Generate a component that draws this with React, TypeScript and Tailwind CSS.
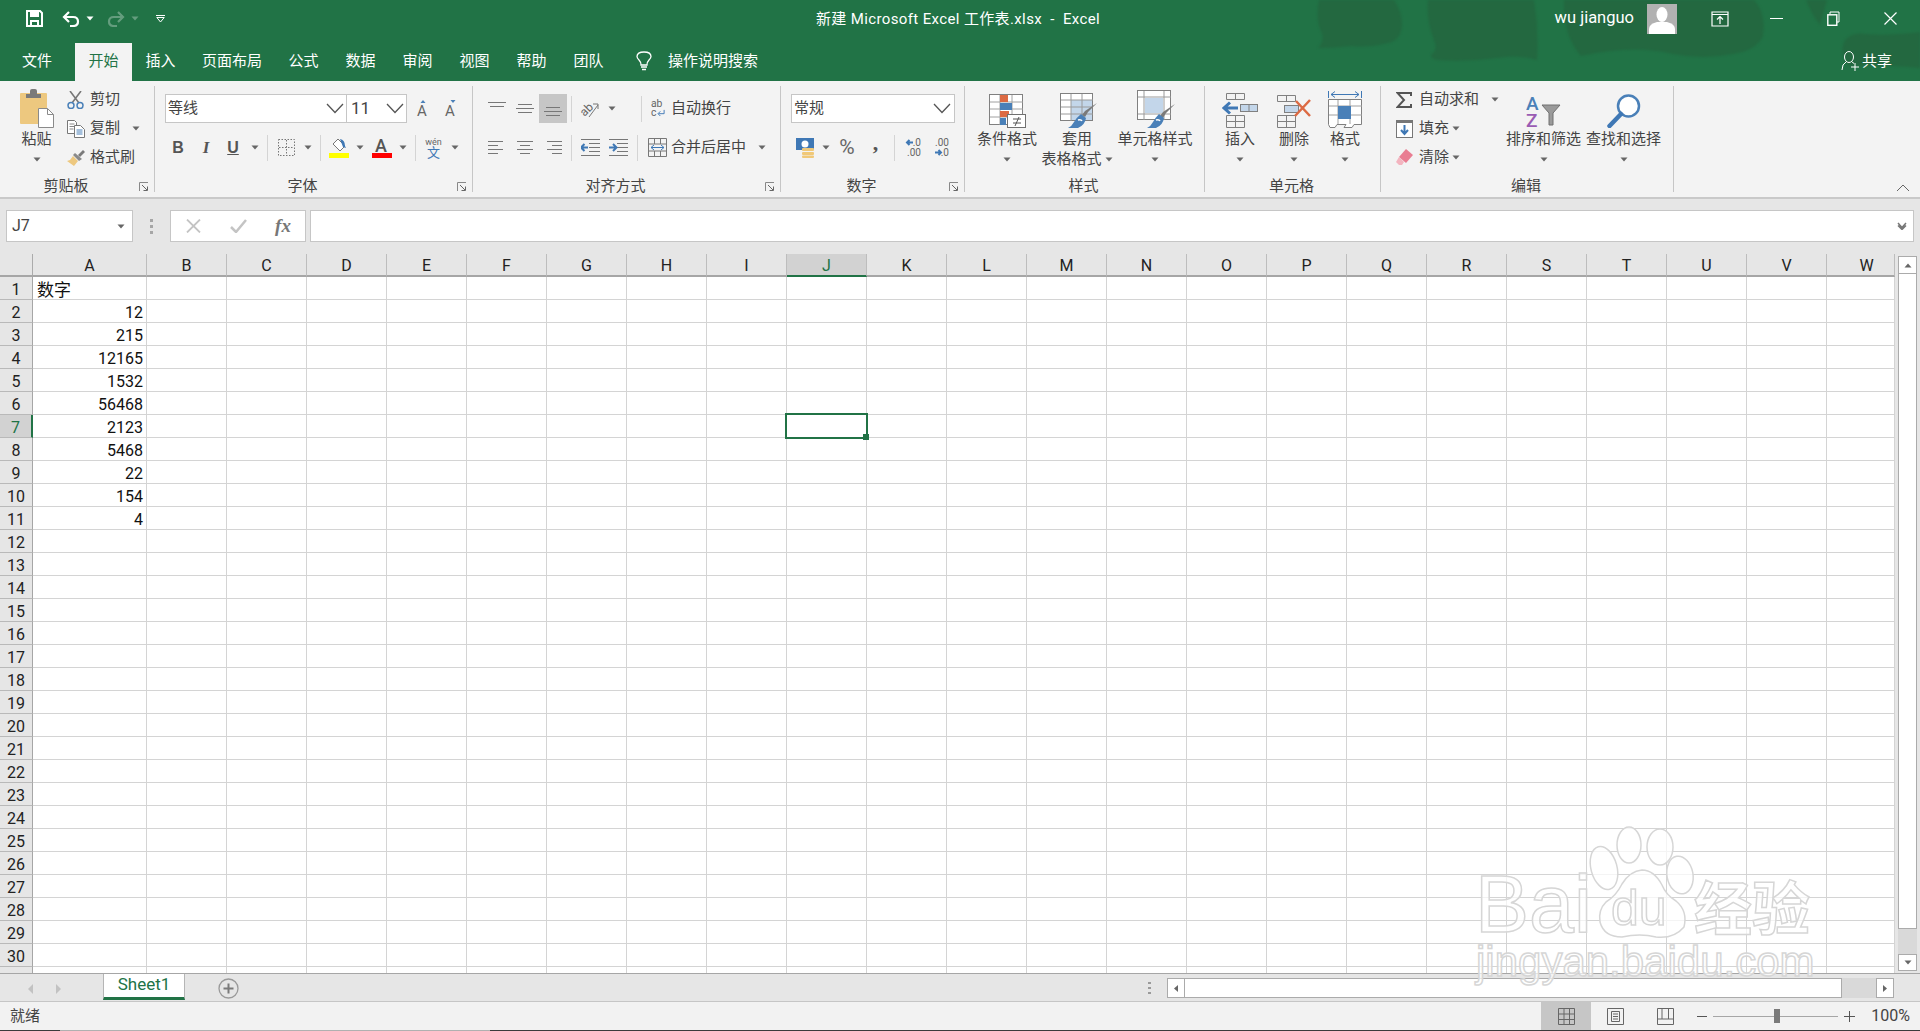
import type { ReactNode } from 'react';

const COLUMNS = ['A', 'B', 'C', 'D', 'E', 'F', 'G', 'H', 'I', 'J', 'K', 'L', 'M', 'N', 'O', 'P', 'Q', 'R', 'S', 'T', 'U', 'V', 'W'];
const ROWS = Array.from({ length: 31 }, (_, i) => i + 1);
const VALUES: Record<number, string> = { 2: '12', 3: '215', 4: '12165', 5: '1532', 6: '56468', 7: '2123', 8: '5468', 9: '22', 10: '154', 11: '4' };
const TABS = [
  { label: '插入', w: 'w-[57px]' },
  { label: '页面布局', w: 'w-[86px]' },
  { label: '公式', w: 'w-[57px]' },
  { label: '数据', w: 'w-[57px]' },
  { label: '审阅', w: 'w-[57px]' },
  { label: '视图', w: 'w-[57px]' },
  { label: '帮助', w: 'w-[57px]' },
  { label: '团队', w: 'w-[57px]' },
];

function Caret({ className = '', color = '#666' }: { className?: string; color?: string }) {
  return (
    <svg width="8" height="5" viewBox="0 0 8 5" className={`shrink-0 ${className}`}>
      <path d="M.5 .5h7L4 4.5z" fill={color} />
    </svg>
  );
}

function Chevron({ className = '' }: { className?: string }) {
  return (
    <svg width="18" height="11" viewBox="0 0 18 11" className={className}>
      <path d="M1 1l8 8.5L17 1" fill="none" stroke="#555" strokeWidth="1.3" />
    </svg>
  );
}

function Launcher() {
  return (
    <svg width="10" height="10" viewBox="0 0 10 10" className="absolute right-[5px] bottom-0">
      <path d="M.5 9V.5H9" fill="none" stroke="#888" />
      <path d="M3 3l5 5M8.5 4.5v4h-4" fill="none" stroke="#666" />
    </svg>
  );
}

function Sep() {
  return <span className="block h-[26px] w-px shrink-0 bg-[#d4d4d4]" />;
}

function PasteIcon() {
  return (
    <svg width="34" height="39" viewBox="0 0 34 39">
      <rect x="0" y="4" width="27" height="31" rx="1" fill="#edc87f" />
      <path d="M6 9V5h4V2q0-2 2-2h3q2 0 2 2v3h4v4z" fill="#7a7a7a" />
      <path d="M18.500 19.500h9l6 6v13h-15z" fill="#fff" stroke="#8a8a8a" />
      <path d="M27.500 19.500v6h6" fill="none" stroke="#8a8a8a" />
    </svg>
  );
}

function CutIcon() {
  return (
    <svg width="17" height="18" viewBox="0 0 17 18">
      <path d="M3 0l9 12M14 0L5 12" stroke="#777" strokeWidth="1.6" fill="none" />
      <circle cx="4" cy="14.500" r="3" fill="none" stroke="#4a80b8" strokeWidth="1.5" />
      <circle cx="13" cy="14.500" r="3" fill="none" stroke="#4a80b8" strokeWidth="1.5" />
    </svg>
  );
}

function CopyIcon() {
  return (
    <svg width="18" height="18" viewBox="0 0 18 18">
      <path d="M.5 .5h7l2 2v11H.5z" fill="#fff" stroke="#777" />
      <path d="M2.500 4h5M2.500 6.500h5M2.500 9h4" stroke="#888" />
      <path d="M7.500 5.500h6l4 4v8h-10z" fill="#fff" stroke="#777" />
      <path d="M9.500 10h6M9.500 12h6M9.500 14h6" stroke="#4a80b8" />
    </svg>
  );
}

function BrushIcon() {
  return (
    <svg width="18" height="16" viewBox="0 0 18 16">
      <path d="M11 5l5-5 2 2-5 5z" fill="#7a7a7a" />
      <path d="M8 3l7 6-3 2-6-6z" fill="#8a8a8a" />
      <path d="M6 6l5 5-4 5-7-5 3-1z" fill="#edc87f" />
    </svg>
  );
}

function AlignIcon({ rows, dy = 0 }: { rows: [number, number][]; dy?: number }) {
  return (
    <svg width="18" height="16" viewBox="0 0 18 16">
      {rows.map(([x, w], i) => (
        <rect key={i} x={x} y={dy + i * 4} width={w} height="1" fill="#777" />
      ))}
    </svg>
  );
}

function IndentIcon({ reverse }: { reverse?: boolean }) {
  return (
    <svg width="19" height="18" viewBox="0 0 19 18">
      <path d="M0 .5h19M8 4.500h11M8 8.500h11M8 12.500h11M0 16.500h19" stroke="#777" />
      <path d={reverse ? 'M0 8.500h6M4 5l3.500 3.500L4 12' : 'M7 8.500H1M3.500 5L0 8.500 3.500 12'} fill="none" stroke="#3f78b5" strokeWidth="2" />
    </svg>
  );
}

function TableIcon() {
  return (
    <svg width="38" height="35" viewBox="0 0 38 35" className="ml-[3px]">
      <rect x=".5" y=".5" width="32" height="27" fill="#fff" stroke="#808080" />
      <rect x="11" y="7" width="21" height="20" fill="#c3d6ea" />
      <path d="M11 1v27M22 1v27M1 7h32M1 14h32M1 21h32" stroke="#9a9a9a" />
      <path d="M37 10l-9 9-3 5-3-2 3-4z" fill="#7a7a7a" />
      <path d="M21 21l5 4q-1 7-8 10H8q4-2 6-6t7-8z" fill="#4a80b8" />
      <path d="M18 27q3-1 4 1" fill="none" stroke="#fff" strokeWidth="1.500" />
    </svg>
  );
}

function CellStyleIcon() {
  return (
    <svg width="38" height="38" viewBox="0 0 38 38" className="ml-px">
      <rect x=".5" y=".5" width="33" height="29" fill="#fff" stroke="#808080" />
      <path d="M1 7h33M1 24h33M7 1v29M27 1v29" stroke="#9a9a9a" />
      <rect x="8" y="8" width="18" height="15" fill="#c3d6ea" />
      <path d="M38 14l-9 9-3 5-3-2 3-4z" fill="#7a7a7a" />
      <path d="M22 24l5 4q-1 7-8 10H10q4-2 6-6t6-8z" fill="#4a80b8" />
      <path d="M19 30q3-1 4 1" fill="none" stroke="#fff" strokeWidth="1.500" />
    </svg>
  );
}

function CondIcon() {
  return (
    <svg width="37" height="34" viewBox="0 0 37 34">
      <rect x=".5" y=".5" width="33" height="30" fill="#fff" stroke="#808080" />
      <path d="M1 8h33M1 15h33M1 23h33M11 1v30M23 1v30" stroke="#a0a0a0" />
      <rect x="11" y="1" width="8" height="7" fill="#dc6a43" />
      <rect x="11" y="9" width="12" height="7" fill="#4a80b8" />
      <rect x="11" y="17" width="9" height="6" fill="#dc6a43" />
      <rect x="11" y="24" width="6" height="7" fill="#4a80b8" />
      <rect x="18.500" y="20.500" width="18" height="13" fill="#fff" stroke="#707070" />
      <path d="M24 25h8M24 29h8M30 23l-4 9" stroke="#555" fill="none" />
    </svg>
  );
}

function InsertIcon() {
  return (
    <svg width="36" height="35" viewBox="0 0 36 35">
      <path d="M4.500 .5h18v6h-18zM13.500 .5v6M4.500 22.500h18v12h-18zM13.500 22.500v12M4.500 28.500h18" fill="none" stroke="#808080" />
      <rect x="18.500" y="11.500" width="17" height="7" fill="#c3d6ea" stroke="#808080" />
      <path d="M27 12v6" stroke="#808080" />
      <path d="M16 15H3M8 9.500L2 15l6 5.500" fill="none" stroke="#3f78b5" strokeWidth="3" />
    </svg>
  );
}

function DeleteIcon() {
  return (
    <svg width="35" height="33" viewBox="0 0 35 33">
      <path d="M.5 .5h18v6H.5zM9.500 .5v6M.5 20.500h18v12H.5zM9.500 20.500v12M.5 26.500h18" fill="none" stroke="#808080" />
      <rect x="7.500" y="10.500" width="14" height="7" fill="#c3d6ea" stroke="#808080" />
      <path d="M19 6l14 15M33 5L18 21" stroke="#dc6a43" strokeWidth="2.500" />
    </svg>
  );
}

function FormatIcon() {
  return (
    <svg width="34" height="38" viewBox="0 0 34 38">
      <path d="M.5 1v7M33.500 1v7M3 4.500h28M7 1.500l-4 3 4 3M27 1.500l4 3-4 3" fill="none" stroke="#3f78b5" />
      <path d="M.5 9.500h33v25H26l-2 3h-8l2-3H9l-2 3H2l-1.500-3z" fill="#fff" stroke="#808080" />
      <path d="M1 16h33M1 25h33M10 10v24M22 10v24" stroke="#a0a0a0" />
      <rect x="10" y="16" width="13" height="13" fill="#4a80b8" />
    </svg>
  );
}

function SortIcon() {
  return (
    <svg width="35" height="32" viewBox="0 0 35 32">
      <text x="0" y="14" fontSize="19" fontFamily="Roboto" fontWeight="500" fill="#4a80b8">A</text>
      <text x="0" y="31" fontSize="19" fontFamily="Roboto" fontWeight="500" fill="#9a5cb4">Z</text>
      <path d="M16 9h18l-7 8v12h-4V17z" fill="#9a9a9a" stroke="#707070" />
    </svg>
  );
}

function FindIcon() {
  return (
    <svg width="34" height="34" viewBox="0 0 34 34">
      <circle cx="21.500" cy="12" r="10.500" fill="#fff" stroke="#4a80b8" strokeWidth="2.500" />
      <path d="M14 20L2.500 32" stroke="#3f78b5" strokeWidth="4.500" strokeLinecap="round" />
    </svg>
  );
}

function Group({ w, label, launcher, children }: { w: string; label: string; launcher?: boolean; children: ReactNode }) {
  return (
    <div className={`relative flex h-[106px] shrink-0 flex-col border-r border-[#c6c6c6] ${w}`}>
      <div className="flex h-[92px]">{children}</div>
      <div className={`flex h-[14px] items-center justify-center pt-[2px] ${launcher ? 'pr-[22px]' : 'pr-[2px]'}`}>{label}</div>
      {launcher && <Launcher />}
    </div>
  );
}

function Large({ icon, label, second, className }: { icon: ReactNode; label: string; second?: ReactNode; className: string }) {
  return (
    <div className={`flex shrink-0 flex-col items-center ${className}`}>
      <div className="flex h-[43px] items-end justify-center pb-px">{icon}</div>
      <div className="h-5 whitespace-nowrap leading-5">{label}</div>
      <div className="flex h-5 items-center justify-center whitespace-nowrap">{second ?? <Caret />}</div>
    </div>
  );
}

function Small({ icon, label, caret }: { icon: ReactNode; label: string; caret?: string }) {
  return (
    <div className="flex h-[29px] items-center whitespace-nowrap">
      <span className="flex w-[23px] justify-start">{icon}</span>
      {label}
      {caret && <Caret className={caret} />}
    </div>
  );
}

function Combo({ text, className, textClass }: { text: string; className: string; textClass: string }) {
  return (
    <div className={`flex h-[29px] shrink-0 items-center justify-between border border-[#c6c6c6] bg-white ${className}`}>
      <span className={textClass}>{text}</span>
      <Chevron />
    </div>
  );
}

function Ribbon() {
  return (
    <div className="flex h-[118px] border-b-2 border-[#c9c9c9] bg-[#f3f3f3] pt-[5px] text-[15px] text-[#444]">
      <Group w="w-[155px]" label="剪贴板" launcher>
        <Large className="ml-[7px] w-[59px]" icon={<PasteIcon />} label="粘贴" />
        <div className="-mt-px ml-px flex flex-col">
          <Small icon={<CutIcon />} label="剪切" />
          <Small icon={<CopyIcon />} label="复制" caret="ml-[12px]" />
          <Small icon={<BrushIcon />} label="格式刷" />
        </div>
      </Group>

      <Group w="w-[318px]" label="字体" launcher>
        <div className="flex flex-col pl-[10px] pt-[8px]">
          <div className="flex items-center">
            <Combo text="等线" className="w-[182px] pr-[2px] pl-[2px]" textClass="" />
            <Combo text="11" className="w-[60px] border-l-0 pr-[2px] pl-[4px]" textClass="text-[17px]" />
            <span className="flex w-[31px] justify-center">
              <svg width="14" height="18" viewBox="0 0 14 18">
                <path d="M7 0l2.500 3h-5z" fill="#4a80b8" />
                <text x="1" y="16" fontSize="15" fontFamily="Roboto" fill="#666">A</text>
              </svg>
            </span>
            <span className="flex w-[25px] justify-center">
              <svg width="14" height="18" viewBox="0 0 14 18">
                <path d="M9 3l2.500-3h-5z" fill="#4a80b8" />
                <text x="1" y="16" fontSize="15" fontFamily="Roboto" fill="#666">A</text>
              </svg>
            </span>
          </div>
          <div className="mt-[10px] flex h-[29px] items-center font-['Liberation_Sans'] text-[#555]">
            <span className="flex w-[26px] justify-center text-[16px] font-bold">B</span>
            <span className="flex w-[30px] justify-center font-['Liberation_Serif'] text-[17px] font-bold italic">I</span>
            <span className="flex w-[24px] justify-center text-[16px] font-bold underline">U</span>
            <span className="flex w-[20px] justify-center"><Caret /></span>
            <span className="ml-[2px]"><Sep /></span>
            <span className="flex w-[36px] justify-center">
              <svg width="17" height="17" viewBox="0 0 17 17">
                <path d="M.5 .5h16v16H.5zM8.500 1v15M1 8.500h15" fill="none" stroke="#777" strokeDasharray="1.500 1.500" />
              </svg>
            </span>
            <span className="flex w-[8px] justify-center"><Caret /></span>
            <span className="ml-[8px]"><Sep /></span>
            <span className="flex w-[36px] justify-center">
              <svg width="20" height="20" viewBox="0 0 20 20">
                <path d="M9 1l7 7-5 5-7-7z" fill="#fff" stroke="#777" />
                <path d="M11 1q5 1 5 7l1 2-3-1z" fill="#3f78b5" />
                <rect x="0" y="15" width="20" height="5" fill="#ffff00" />
              </svg>
            </span>
            <span className="flex w-[6px] justify-center"><Caret /></span>
            <span className="flex w-[38px] justify-center">
              <svg width="20" height="20" viewBox="0 0 20 20">
                <text x="3" y="14" fontSize="18" fontFamily="Roboto" fontWeight="500" fill="#555">A</text>
                <rect x="0" y="15" width="20" height="5" fill="#ff0000" />
              </svg>
            </span>
            <span className="flex w-[4px] justify-center"><Caret /></span>
            <span className="ml-[10px]"><Sep /></span>
            <span className="flex w-[35px] justify-center">
              <svg width="17" height="22" viewBox="0 0 17 22">
                <text x="8.500" y="8" textAnchor="middle" fontSize="9" fontFamily="Roboto" fill="#666">wén</text>
                <text x="8.500" y="20" textAnchor="middle" fontSize="13" fontFamily="Noto Sans CJK SC" fill="#3f78b5">文</text>
              </svg>
            </span>
            <span className="flex w-[8px] justify-center"><Caret /></span>
          </div>
        </div>
      </Group>

      <Group w="w-[308px]" label="对齐方式" launcher>
        <div className="flex flex-col pl-[10px] pt-[8px]">
          <div className="flex h-[29px] items-center">
            <span className="flex w-[28px] justify-center"><AlignIcon rows={[[0, 18], [2, 14]]} dy={1} /></span>
            <span className="flex w-[28px] justify-center"><AlignIcon rows={[[2, 14], [0, 18], [2, 14]]} dy={3} /></span>
            <span className="flex h-[29px] w-[28px] items-center justify-center bg-[#c6c6c6]"><AlignIcon rows={[[2, 14], [0, 18], [2, 14]]} dy={6} /></span>
            <span className="ml-[4px]"><Sep /></span>
            <span className="flex w-[36px] justify-center">
              <svg width="20" height="18" viewBox="0 0 20 18">
                <text x="0" y="14" fontSize="12" fontFamily="Roboto" fill="#666" transform="rotate(-45 6 10)">ab</text>
                <path d="M9 17L18 5M13 4h5v5" fill="none" stroke="#777" />
              </svg>
            </span>
            <span className="flex w-[8px] justify-center"><Caret /></span>
            <span className="ml-[25px]"><Sep /></span>
            <span className="ml-[8px] flex w-[16px] justify-center">
              <svg width="17" height="21" viewBox="0 0 17 21">
                <text x="1" y="9" fontSize="11" fontFamily="Roboto" fill="#666">ab</text>
                <text x="1" y="19" fontSize="11" fontFamily="Roboto" fill="#666">c</text>
                <path d="M15 12v4H9M11 13.500L8.500 16l2.500 2.500" fill="none" stroke="#3f78b5" />
              </svg>
            </span>
            <span className="ml-[5px] whitespace-nowrap">自动换行</span>
          </div>
          <div className="mt-[10px] flex h-[29px] items-center">
            <span className="flex w-[28px] justify-center"><AlignIcon rows={[[0, 15], [0, 10], [0, 15], [0, 10]]} dy={1} /></span>
            <span className="flex w-[28px] justify-center"><AlignIcon rows={[[1, 16], [4, 10], [1, 16], [4, 10]]} dy={1} /></span>
            <span className="flex w-[28px] justify-center"><AlignIcon rows={[[3, 15], [8, 10], [3, 15], [8, 10]]} dy={1} /></span>
            <span className="ml-[4px]"><Sep /></span>
            <span className="ml-[4px] flex w-[28px] justify-center"><IndentIcon /></span>
            <span className="flex w-[28px] justify-center"><IndentIcon reverse /></span>
            <span className="ml-[5px]"><Sep /></span>
            <span className="ml-[10px] flex w-[19px] justify-center">
              <svg width="19" height="19" viewBox="0 0 19 19">
                <path d="M.5 .5h18v18H.5zM1 6h17M1 13h17M6.500 1v5M12.500 1v5M6.500 13v5M12.500 13v5" fill="none" stroke="#777" />
                <path d="M3 9.500h13M6 7L3 9.500 6 12M13 7l3 2.500L13 12" fill="none" stroke="#3f78b5" />
              </svg>
            </span>
            <span className="ml-[4px] whitespace-nowrap">合并后居中</span>
            <Caret className="ml-[12px]" />
          </div>
        </div>
      </Group>

      <Group w="w-[184px]" label="数字" launcher>
        <div className="flex flex-col pl-[10px] pt-[8px]">
          <Combo text="常规" className="w-[164px] pr-[3px] pl-[2px]" textClass="" />
          <div className="mt-[10px] flex h-[29px] items-center">
            <span className="flex w-[29px] justify-center">
              <svg width="19" height="20" viewBox="0 0 19 20">
                <rect x="0" y="0" width="18" height="12" fill="#3f78b5" />
                <circle cx="9" cy="6" r="3.500" fill="#fff" />
                <rect x="6" y="10" width="12" height="3" rx="1" fill="#f0c878" />
                <rect x="6" y="14" width="12" height="3" rx="1" fill="#f0c878" />
                <rect x="6" y="17.500" width="12" height="2.500" rx="1" fill="#f0c878" />
              </svg>
            </span>
            <span className="flex w-[12px] justify-center"><Caret /></span>
            <span className="flex w-[30px] justify-center font-['Roboto'] text-[21px] text-[#666]">%</span>
            <span className="flex h-[22px] w-[27px] justify-center font-['Liberation_Serif'] text-[22px] font-bold leading-[12px] text-[#555]">,</span>
            <span className="ml-[5px]"><Sep /></span>
            <span className="flex w-[36px] justify-center">
              <svg width="16" height="19" viewBox="0 0 16 19">
                <path d="M8 4.500H2M4.500 2L2 4.500 4.500 7" fill="none" stroke="#3f78b5" strokeWidth="2" />
                <text x="16" y="8" textAnchor="end" fontSize="10" fontFamily="Roboto" fill="#666">.0</text>
                <text x="16" y="18" textAnchor="end" fontSize="10" fontFamily="Roboto" fill="#666">.00</text>
              </svg>
            </span>
            <span className="flex w-[20px] justify-center">
              <svg width="16" height="19" viewBox="0 0 16 19">
                <text x="16" y="8" textAnchor="end" fontSize="10" fontFamily="Roboto" fill="#666">.00</text>
                <path d="M2 14.500h6M5.500 12L8 14.500 5.500 17" fill="none" stroke="#3f78b5" strokeWidth="2" />
                <text x="16" y="18" textAnchor="end" fontSize="10" fontFamily="Roboto" fill="#666">.0</text>
              </svg>
            </span>
          </div>
        </div>
      </Group>

      <Group w="w-[240px]" label="样式">
        <Large className="ml-[12px] w-[60px]" icon={<CondIcon />} label="条件格式" />
        <Large
          className="ml-[5px] w-[70px]"
          icon={<TableIcon />}
          label="套用"
          second={<span className="flex items-center">表格格式<Caret className="ml-[3px]" /></span>}
        />
        <Large className="ml-[5px] w-[76px]" icon={<CellStyleIcon />} label="单元格样式" />
      </Group>

      <Group w="w-[176px]" label="单元格">
        <Large className="ml-[17px] w-[36px]" icon={<InsertIcon />} label="插入" />
        <Large className="ml-[19px] w-[34px]" icon={<DeleteIcon />} label="删除" />
        <Large className="ml-[17px] w-[34px]" icon={<FormatIcon />} label="格式" />
      </Group>

      <Group w="w-[293px]" label="编辑">
        <div className="-mt-px ml-[15px] flex w-[110px] flex-col">
          <Small
            icon={<svg width="16" height="16" viewBox="0 0 16 16"><path d="M15 4V1H1.500L8 8l-6.500 7H15v-3" fill="none" stroke="#555" strokeWidth="2" /></svg>}
            label="自动求和"
            caret="ml-[12px]"
          />
          <Small
            icon={
              <svg width="17" height="18" viewBox="0 0 17 18">
                <rect x=".5" y=".5" width="16" height="17" fill="#fff" stroke="#777" />
                <rect x="1" y="1" width="15" height="2" fill="#777" />
                <path d="M8.500 5v9M5 10l3.500 4 3.500-4" fill="none" stroke="#3f78b5" strokeWidth="2" />
              </svg>
            }
            label="填充"
            caret="ml-[3px]"
          />
          <Small
            icon={
              <svg width="17" height="17" viewBox="0 0 17 17">
                <path d="M10 0l7 6-7 8-7-6z" fill="#e97d92" />
                <path d="M3 8l5 5-2 3H3l-3-3z" fill="#f3b4bf" />
              </svg>
            }
            label="清除"
            caret="ml-[3px]"
          />
        </div>
        <Large className="w-[75px]" icon={<SortIcon />} label="排序和筛选" />
        <Large className="ml-[5px] w-[75px]" icon={<FindIcon />} label="查找和选择" />
      </Group>

      <div className="flex flex-1 items-end justify-end pr-[10px] pb-[3px]">
        <svg width="14" height="8" viewBox="0 0 14 8" className="mb-[2px]">
          <path d="M1 7l6-6 6 6" fill="none" stroke="#666" />
        </svg>
      </div>
    </div>
  );
}

function TitleBar() {
  return (
    <header className="relative h-[81px] bg-[#217346] text-white">
      {/* office theme pattern */}
      <svg width="620" height="81" viewBox="0 0 620 81" className="absolute top-0 right-0 blur-[1px]">
        <g fill="#236840">
          <path d="M19 0h75q8 12 8 24 0 13-10 18-22 6-40 4-18 2-34 2 6-6 4-14Q15 20 19 0z" />
          <path d="M128 0h106q5 30 3 60-20-6-40-2-30 4-60 2-8-2-5-6 6-4 2-14-8-20-6-40z" />
          <path d="M266 0h190q12 12 9 36-6 14-30 18-30 6-60 0-40-10-92 2-18-20-17-56z" transform="translate(-2 0)" />
          <path d="M506 0h21q-4 14-7 25-8-10-14-25z" />
          <path d="M545 40q8-8 20-6 22 2 55-2v36q-40-4-70-2-12-12-5-26z" />
        </g>
      </svg>
      <div className="relative flex h-[37px] items-center">
        <div className="flex w-[362px] shrink-0 items-center">
          <svg width="17" height="17" viewBox="0 0 17 17" className="ml-[26px]">
            <path d="M1 1h13l2 2v13H1z" fill="none" stroke="#fff" strokeWidth="2" />
            <rect x="4" y="1" width="9" height="6" fill="#fff" />
            <path d="M5 16v-5h7v5" fill="none" stroke="#fff" strokeWidth="2" />
          </svg>
          <svg width="18" height="16" viewBox="0 0 18 16" className="ml-[19px]">
            <path d="M7 1L2 6l5 5M2 6h9q5 0 5 4.500T11 15H8" fill="none" stroke="#fff" strokeWidth="2.200" />
          </svg>
          <Caret className="ml-[6px]" color="#fff" />
          <svg width="18" height="16" viewBox="0 0 18 16" className="ml-[13px] opacity-30">
            <path d="M11 1l5 5-5 5M16 6H7Q2 6 2 10.500T7 15h3" fill="none" stroke="#fff" strokeWidth="2.200" />
          </svg>
          <Caret className="ml-[6px] opacity-30" color="#fff" />
          <svg width="9" height="8" viewBox="0 0 9 8" className="ml-[17px]">
            <path d="M0 .5h9M.8 2.500L4.500 7l3.700-4.500z" fill="none" stroke="#fff" />
          </svg>
        </div>
        <div className="flex-1 pt-px text-center text-[15px] tracking-[.37px] whitespace-pre">新建 Microsoft Excel 工作表.xlsx  -  Excel</div>
        <div className="flex w-[366px] shrink-0 items-center justify-end pr-px">
          <span className="text-[16.5px]">wu jianguo</span>
          <svg width="30" height="30" viewBox="0 0 30 30" className="ml-[13px]">
            <rect width="30" height="30" fill="#b1b1b1" />
            <ellipse cx="15" cy="10.500" rx="5.500" ry="7.500" fill="#fff" />
            <path d="M2 30v-5q0-5 8-7h10q8 2 8 7v5z" fill="#fff" />
          </svg>
          <span className="ml-[14px] flex w-[57px] justify-center">
            <svg width="18" height="16" viewBox="0 0 18 16">
              <path d="M1 1h16v14H1zM1 3.500h16" fill="none" stroke="#fff" strokeWidth="1.200" />
              <path d="M9 13V6M6 8.500L9 5.500 12 8.500" fill="none" stroke="#fff" strokeWidth="1.200" />
            </svg>
          </span>
          <span className="flex w-[57px] justify-center"><span className="h-px w-[13px] bg-white" /></span>
          <span className="flex w-[57px] justify-center">
            <svg width="13" height="15" viewBox="0 0 13 15">
              <path d="M3 3V1h9v10h-2" fill="none" stroke="#fff" />
              <rect x=".8" y="3.800" width="9" height="10.500" fill="none" stroke="#fff" strokeWidth="1.400" />
            </svg>
          </span>
          <span className="flex w-[57px] justify-center">
            <svg width="13" height="13" viewBox="0 0 13 13">
              <path d="M.5 .5l12 12M12.500 .5l-12 12" stroke="#fff" strokeWidth="1.200" />
            </svg>
          </span>
        </div>
      </div>
      <div className="relative flex h-[44px] items-end text-[15px]">
        <div className="flex h-[38px] w-[75px] items-center pb-[2px] pl-[22px]">文件</div>
        <div className="flex h-[38px] w-[57px] items-center justify-center bg-[#f3f3f3] pb-[2px] text-[#217346]">开始</div>
        {TABS.map((tab) => (
          <div key={tab.label} className={`flex h-[38px] items-center justify-center pb-[2px] ${tab.w}`}>{tab.label}</div>
        ))}
        <div className="flex h-[38px] items-center pb-[2px]">
          <svg width="16" height="20" viewBox="0 0 16 20" className="ml-[19px]">
            <path d="M5 14q0-3-2-5Q1 7 1 5.500 1 1 8 1t7 4.500Q15 7 13 9q-2 2-2 5z" fill="none" stroke="#fff" strokeWidth="1.300" />
            <path d="M5 16h6M6 18.500h4" stroke="#fff" strokeWidth="1.500" />
          </svg>
          <span className="ml-[16px]">操作说明搜索</span>
        </div>
        <div className="ml-auto flex h-[38px] items-center pr-[28px] pb-[2px]">
          <svg width="19" height="20" viewBox="0 0 19 20">
            <ellipse cx="8" cy="6" rx="4.500" ry="5.500" fill="none" stroke="#fff" />
            <path d="M1 19q0-6 4-8M11 11q1 .5 2 1.500M14 12v8M10 16h8" fill="none" stroke="#fff" />
          </svg>
          <span className="ml-[2px]">共享</span>
        </div>
      </div>
    </header>
  );
}

function FormulaBar() {
  return (
    <div className="flex h-[55px] items-start bg-[#e6e6e6] pt-[11px]">
      <div className="ml-[6px] flex h-[32px] w-[127px] items-center justify-between border border-[#c6c6c6] bg-white pr-[7px] pl-[5px] font-['Roboto'] text-[16px] text-[#444]">
        J7
        <Caret />
      </div>
      <div className="ml-[16px] flex h-[32px] w-[4px] flex-col items-center justify-center gap-[3px]">
        <span className="h-[3px] w-[3px] bg-[#a6a6a6]" />
        <span className="h-[3px] w-[3px] bg-[#a6a6a6]" />
        <span className="h-[3px] w-[3px] bg-[#a6a6a6]" />
      </div>
      <div className="ml-[17px] flex h-[32px] w-[136px] items-center border border-[#c6c6c6] bg-white">
        <span className="flex w-[45px] justify-center">
          <svg width="15" height="14" viewBox="0 0 15 14">
            <path d="M1 .5l13 13M14 .5l-13 13" stroke="#c4c4c4" strokeWidth="1.800" />
          </svg>
        </span>
        <span className="flex w-[45px] justify-center">
          <svg width="17" height="14" viewBox="0 0 17 14">
            <path d="M1 8l5 5L16 1" fill="none" stroke="#c4c4c4" strokeWidth="2.500" />
          </svg>
        </span>
        <span className="flex w-[44px] justify-center font-['Liberation_Serif'] text-[19px] font-bold text-[#777] italic">fx</span>
      </div>
      <div className="ml-[4px] flex h-[32px] w-[1604px] items-center justify-end border border-[#c6c6c6] bg-white pr-[6px]">
        <svg width="10" height="8" viewBox="0 0 10 8">
          <path d="M1 1l4 4.500L9 1M1 3.500l4 4 4-4" fill="none" stroke="#777" strokeWidth="1.500" />
        </svg>
      </div>
    </div>
  );
}

function columnWidth(i: number) {
  if (i === 0) return 'w-[114px]';
  if (i === COLUMNS.length - 1) return 'w-[68px] pl-[12px]';
  return 'w-[80px]';
}

function Grid() {
  return (
    <div className="flex h-[719px] overflow-hidden bg-[#e6e6e6]">
      <div className="w-[1895px] shrink-0 border-r border-[#a6a6a6] font-['Roboto'] text-[16px]">
        <div className="flex h-[23px]">
          <div className="w-[33px] shrink-0 border-r border-b-2 border-[#ababab] border-b-[#a6a6a6]" />
          {COLUMNS.map((c, i) => (
            <div
              key={c}
              className={`flex shrink-0 items-center justify-center border-r pt-[3px] ${columnWidth(i)} ${
                c === 'J'
                  ? 'border-b-2 border-[#bdbdbd] border-b-[#217346] bg-[#d2d2d2] text-[#217346]'
                  : 'border-b-2 border-[#bdbdbd] border-b-[#a6a6a6] text-[#222]'
              }`}
            >
              {c}
            </div>
          ))}
        </div>
        {ROWS.map((row) => (
          <div key={row} className="flex h-[23px]">
            <div
              className={`flex w-[33px] shrink-0 items-center justify-center border-b border-[#b9b9b9] pt-[4px] ${
                row === 7 ? 'border-r-2 border-r-[#217346] bg-[#d2d2d2] text-[#217346]' : 'border-r border-r-[#a6a6a6] text-[#222]'
              }`}
            >
              {row}
            </div>
            {COLUMNS.map((c, i) => (
              <div key={c} className={`relative flex shrink-0 items-center justify-end border-r border-b border-[#d4d4d4] bg-white pt-[4px] pr-[3px] text-[#111] ${i === COLUMNS.length - 1 ? 'w-[68px]' : columnWidth(i)}`}>
                {c === 'A' && row === 1 && <span className="mr-auto -mt-[3px] ml-[4px] font-['Noto_Sans_CJK_SC'] text-[17px] leading-[22px]">数字</span>}
                {c === 'A' && VALUES[row]}
                {c === 'J' && row === 7 && (
                  <div className="absolute -top-[2px] -left-[2px] z-10 h-[26px] w-[83px] border-2 border-[#217346]">
                    <span className="absolute -right-[3px] -bottom-[3px] h-[6px] w-[6px] bg-[#217346]" />
                  </div>
                )}
              </div>
            ))}
          </div>
        ))}
      </div>
      <div className="ml-[3px] flex w-[19px] flex-col pt-[2px]">
        <div className="flex h-[18px] items-center justify-center border border-[#ababab] bg-white">
          <Caret className="rotate-180" />
        </div>
        <div className="h-[655px] border-x border-b border-[#ababab] bg-white" />
        <div className="h-[25px] bg-[#d9d9d9]" />
        <div className="flex h-[17px] items-center justify-center border border-[#ababab] bg-white">
          <Caret />
        </div>
      </div>
    </div>
  );
}

function SheetTabs() {
  return (
    <div className="flex h-[29px] items-start border-t border-b border-t-[#a6a6a6] border-b-[#c6c6c6] bg-[#e6e6e6]">
      <svg width="36" height="12" viewBox="0 0 36 12" className="mt-[9px] ml-[27px]">
        <path d="M6 1v10L1 6z" fill="#c2c2c2" />
        <path d="M29 1v10l5-5z" fill="#c2c2c2" />
      </svg>
      <div className="ml-[40px] flex h-[26px] w-[82px] shrink-0 items-center justify-center border-x border-b-[3px] border-x-[#b5b5b5] border-b-[#217346] bg-white pb-[2px] font-['Roboto'] text-[17px] text-[#217346]">
        Sheet1
      </div>
      <svg width="21" height="21" viewBox="0 0 21 21" className="mt-[4px] ml-[33px]">
        <circle cx="10.500" cy="10.500" r="9.500" fill="none" stroke="#9a9a9a" strokeWidth="1.300" />
        <path d="M10.500 5.500v10M5.500 10.500h10" stroke="#7a7a7a" strokeWidth="2" />
      </svg>
      <div className="ml-[909px] mt-[8px] flex flex-col gap-[3px]">
        <span className="h-[2px] w-[3px] bg-[#9a9a9a]" />
        <span className="h-[2px] w-[3px] bg-[#9a9a9a]" />
        <span className="h-[2px] w-[3px] bg-[#9a9a9a]" />
      </div>
      <div className="mt-[4px] ml-[16px] flex h-[20px] w-[727px] items-stretch">
        <div className="flex w-[18px] items-center justify-center border border-[#ababab] bg-white">
          <Caret className="rotate-90" />
        </div>
        <div className="w-[657px] border-y border-r border-[#ababab] bg-white" />
        <div className="w-[34px] bg-[#d9d9d9]" />
        <div className="flex w-[18px] items-center justify-center border border-[#ababab] bg-white">
          <Caret className="-rotate-90" />
        </div>
      </div>
    </div>
  );
}

function StatusBar() {
  return (
    <div className="flex h-[29px] flex-col bg-[#f2f2f2] text-[15px] text-[#444]">
      <div className="flex h-[28px] items-stretch">
        <span className="flex items-center pl-[10px]">就绪</span>
        <span className="ml-auto flex w-[50px] items-center justify-center bg-[#c6c6c6]">
          <svg width="17" height="17" viewBox="0 0 17 17">
            <path d="M.5 .5h16v16H.5zM1 6h16M1 11.500h16M6 1v16M11.500 1v16" fill="none" stroke="#666" />
          </svg>
        </span>
        <span className="flex w-[49px] items-center justify-center">
          <svg width="17" height="17" viewBox="0 0 17 17">
            <path d="M.5 .5h16v16H.5z" fill="none" stroke="#666" />
            <path d="M4.500 3.500h8v10h-8zM6 6h5M6 8.500h5M6 11h5" fill="none" stroke="#666" />
          </svg>
        </span>
        <span className="flex w-[50px] items-center justify-center">
          <svg width="17" height="17" viewBox="0 0 17 17">
            <path d="M.5 .5h16v16H.5zM1 11h15M5 1v10M11.500 1v10" fill="none" stroke="#666" />
          </svg>
        </span>
        <span className="flex w-[23px] items-center justify-center"><span className="h-px w-[10px] bg-[#555]" /></span>
        <span className="relative flex w-[125px] items-center">
          <span className="h-px w-full bg-[#a6a6a6]" />
          <span className="absolute left-[61px] h-[14px] w-[6px] bg-[#7a7a7a]" />
        </span>
        <span className="flex w-[23px] items-center justify-center text-[#555]">
          <svg width="11" height="11" viewBox="0 0 11 11"><path d="M5.500 0v11M0 5.500h11" stroke="#555" /></svg>
        </span>
        <span className="ml-[10px] flex items-center pr-[10px] font-['Roboto'] text-[16px]">100%</span>
      </div>
      <div className="flex h-px">
        <span className="w-[60px] bg-[#3b3b3b]" />
        <span className="w-[430px] bg-[#b0b0b0]" />
        <span className="flex-1 bg-[#3b3b3b]" />
      </div>
    </div>
  );
}

function Watermark() {
  const outline = '[-webkit-text-stroke:1.500px_#d6d6d6]';
  return (
    <div className="pointer-events-none absolute top-[840px] left-[1470px] z-20 h-[155px] w-[350px]">
      <svg width="350" height="100" viewBox="0 0 350 100" className="absolute top-0 left-0 overflow-visible">
        <g fill="#ffffff" fillOpacity=".75" stroke="#d6d6d6" strokeWidth="1.500">
          <ellipse cx="134" cy="28" rx="13" ry="22" transform="rotate(-15 134 28)" />
          <ellipse cx="159" cy="5" rx="12" ry="18" />
          <ellipse cx="190" cy="7" rx="13" ry="18" />
          <ellipse cx="210" cy="35" rx="13" ry="19" transform="rotate(-10 210 35)" />
          <path d="M172 30q-12 1-20 14-6 12-16 18-8 8-6 20 4 15 22 15 18-4 34 0 18 2 28-10 4-16-8-26-10-6-14-16-8-15-20-15z" />
        </g>
      </svg>
      <span className={`absolute top-[19px] left-[5px] font-['Liberation_Sans'] text-[81px] leading-[90px] text-white/70 ${outline}`}>Bai</span>
      <span className={`absolute top-[38px] left-[141px] font-['Liberation_Sans'] text-[50px] leading-[60px] text-white/40 ${outline}`}>du</span>
      <span className={`absolute top-[33px] left-[224px] font-['Noto_Sans_CJK_SC'] text-[58px] leading-[64px] font-bold text-white/70 ${outline}`}>经验</span>
      <span className={`absolute top-[97px] left-[6px] font-['Liberation_Sans'] text-[42px] leading-[50px] whitespace-nowrap text-white/70 ${outline}`}>jingyan.baidu.com</span>
    </div>
  );
}

export default function App() {
  return (
    <div className="relative h-[1031px] w-[1920px] overflow-hidden bg-white font-['Roboto','Noto_Sans_CJK_SC',sans-serif]">
      <TitleBar />
      <Ribbon />
      <FormulaBar />
      <Grid />
      <SheetTabs />
      <StatusBar />
      <Watermark />
    </div>
  );
}
